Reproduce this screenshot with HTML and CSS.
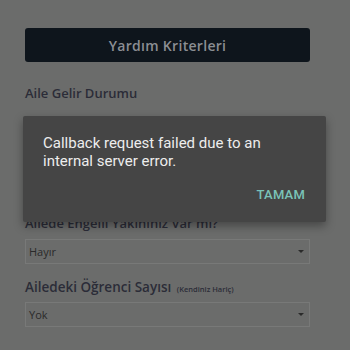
FILE: index.html
```html
<!DOCTYPE html>
<html lang="tr">
<head>
<meta charset="utf-8">
<link rel="stylesheet" href="styles.css">
</head>
<body>
<div class="page">
  <div class="btn">Yardım Kriterleri</div>
  <div class="label l1">Aile Gelir Durumu</div>
  <div class="select s1"><span>Seçiniz</span><i class="arrow"></i></div>
  <div class="label l2">Ailede Engelli Yakınınız Var mı?</div>
  <div class="select s2"><span>Hayır</span><i class="arrow"></i></div>
  <div class="label l3">Ailedeki Öğrenci Sayısı <small>(Kendiniz Hariç)</small></div>
  <div class="select s3"><span>Yok</span><i class="arrow"></i></div>
</div>
<div class="dialog">
  <p class="msg">Callback request failed due to an internal server error.</p>
  <div class="actions"><span class="ok">TAMAM</span></div>
</div>
</body>
</html>
```
FILE: styles.css
```css
html, body {
  margin: 0;
  padding: 0;
  background: #6b6c6b;
  width: 350px;
  height: 350px;
  overflow: hidden;
}
.page {
  padding: 28px 40px 0 25px;
  font-family: "Open Sans", "Noto Sans", sans-serif;
}
.btn {
  height: 34px;
  background: #0e151c;
  border-radius: 3px;
  color: #8b8e93;
  font-size: 14px;
  font-weight: 600;
  letter-spacing: 0.3px;
  display: flex;
  align-items: center;
  justify-content: center;
}
.label {
  color: #2b2c38;
  font-weight: 600;
  line-height: 16px;
}
.l1 { font-size: 13px; margin-top: 23px; }
.l2 { font-size: 13px; margin-top: 74px; }
.l3 { font-size: 13.5px; margin-top: 14px; line-height: 18px; }
.l3 small { font-size: 7.5px; font-weight: 600; line-height: 0; margin-left: 2px; }
.select {
  height: 25px;
  box-sizing: border-box;
  border: 1px solid #787978;
  display: flex;
  align-items: center;
  justify-content: space-between;
  padding: 0 5px 0 3px;
  color: #2a2a2a;
  font-size: 11px;
  font-family: "Open Sans", sans-serif;
}
.s1 { margin-top: 15px; background: #3c3c3c; }
.s2 { margin-top: 8px; }
.s3 { margin-top: 6px; }
.arrow {
  width: 0;
  height: 0;
  border-left: 3px solid transparent;
  border-right: 3px solid transparent;
  border-top: 3px solid #2a2a2a;
}
.dialog {
  position: absolute;
  left: 23px;
  top: 116px;
  width: 303px;
  height: 106px;
  box-sizing: border-box;
  background: #454545;
  border-radius: 2px;
  box-shadow: 0 4px 10px rgba(0,0,0,0.35);
  padding: 18px 21px 0 20px;
  font-family: Roboto, sans-serif;
}
.msg {
  margin: 0;
  color: #ededed;
  font-size: 15px;
  line-height: 18px;
}
.actions {
  display: flex;
  justify-content: flex-end;
  margin-top: 17px;
  line-height: 16px;
}
.ok {
  color: #7ac3b8;
  font-size: 13px;
  font-weight: 500;
  letter-spacing: 0.2px;
}
```
